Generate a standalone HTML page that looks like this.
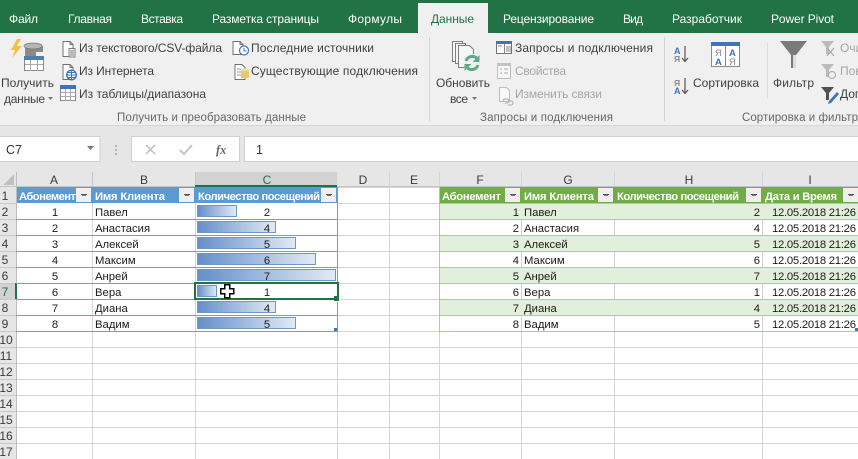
<!DOCTYPE html>
<html><head><meta charset="utf-8"><title>Excel</title>
<style>
html,body{margin:0;padding:0;background:#fff;overflow:hidden}
svg{display:block}
text{font-family:"Liberation Sans",sans-serif;font-size:12px;fill:#333}
.t{fill:#fff;font-size:12px}
.r{fill:#404040;font-size:12px}
.g{fill:#a6a6a6;font-size:12px}
.l{fill:#666;font-size:11.5px}
.c{font-size:11.3px;fill:#1a1a1a}
.h{font-size:11.2px;fill:#fff;font-weight:bold}
.m{text-anchor:middle}
.e{text-anchor:end}
.n{fill:#3a3a3a;font-size:12px;text-anchor:middle}
.q{shape-rendering:crispEdges}
</style></head><body>
<svg width="858" height="459" viewBox="0 0 858 459" xmlns="http://www.w3.org/2000/svg">
<defs>
<linearGradient id="b"><stop offset="0" stop-color="#648fc8"/><stop offset="1" stop-color="#e3eaf5"/></linearGradient>
</defs>
<g class="q">
<rect width="858" height="459" fill="#fff"/>
<rect width="858" height="33" fill="#217346"/>
<rect x="418" y="3" width="70" height="31" fill="#f0f0f0"/>
<rect y="33" width="858" height="92" fill="#f0f0f0"/>
<rect y="125" width="858" height="62" fill="#e6e6e6"/>
<rect y="125" width="858" height="1" fill="#d6d6d6"/>
<rect x="429" y="37" width="1" height="84" fill="#d4d4d4"/>
<rect x="664" y="37" width="1" height="84" fill="#d4d4d4"/>
<rect x="767" y="43" width="1" height="55" fill="#dcdcdc"/>
<!-- formula bar -->
<rect x="-1" y="136.500" width="101" height="25" fill="#fff" stroke="#d0d0d0"/>
<rect x="131.500" y="136.500" width="108" height="25" fill="#fff" stroke="#d0d0d0"/>
<rect x="244.500" y="136.500" width="620" height="25" fill="#fff" stroke="#d0d0d0"/>
<rect x="115" y="145" width="2" height="2" fill="#b5b5b5"/><rect x="115" y="149" width="2" height="2" fill="#b5b5b5"/><rect x="115" y="153" width="2" height="2" fill="#b5b5b5"/>
<!-- row headers -->
<rect y="172" width="858" height="15" fill="#e6e6e6"/>
<rect y="187" width="16" height="272" fill="#e6e6e6"/>
<rect x="195" y="172" width="142" height="14" fill="#d2d2d2"/>
<rect x="195" y="185" width="142" height="2" fill="#217346"/>
<rect y="283" width="16" height="16" fill="#d2d2d2"/>
<!-- grid -->
<rect x="16" y="331" width="842" height="1" fill="#d4d4d4"/><rect x="16" y="347" width="842" height="1" fill="#d4d4d4"/>
<rect x="16" y="363" width="842" height="1" fill="#d4d4d4"/><rect x="16" y="379" width="842" height="1" fill="#d4d4d4"/>
<rect x="16" y="395" width="842" height="1" fill="#d4d4d4"/><rect x="16" y="411" width="842" height="1" fill="#d4d4d4"/>
<rect x="16" y="427" width="842" height="1" fill="#d4d4d4"/><rect x="16" y="443" width="842" height="1" fill="#d4d4d4"/>
<rect x="337" y="187" width="102" height="1" fill="#d4d4d4"/><rect x="337" y="203" width="102" height="1" fill="#d4d4d4"/>
<rect x="337" y="219" width="102" height="1" fill="#d4d4d4"/><rect x="337" y="235" width="102" height="1" fill="#d4d4d4"/>
<rect x="337" y="251" width="102" height="1" fill="#d4d4d4"/><rect x="337" y="267" width="102" height="1" fill="#d4d4d4"/>
<rect x="337" y="283" width="102" height="1" fill="#d4d4d4"/><rect x="337" y="299" width="102" height="1" fill="#d4d4d4"/>
<rect x="337" y="315" width="102" height="1" fill="#d4d4d4"/>
<rect x="92" y="203" width="1" height="256" fill="#d4d4d4"/><rect x="195" y="203" width="1" height="256" fill="#d4d4d4"/>
<rect x="337" y="187" width="1" height="272" fill="#d4d4d4"/><rect x="389" y="172" width="1" height="287" fill="#d4d4d4"/>
<rect x="439" y="172" width="1" height="287" fill="#d4d4d4"/><rect x="521" y="172" width="1" height="287" fill="#d4d4d4"/>
<rect x="614" y="172" width="1" height="287" fill="#d4d4d4"/><rect x="762" y="172" width="1" height="287" fill="#d4d4d4"/>
<rect x="16" y="172" width="1" height="287" fill="#bdbdbd"/><rect x="92" y="172" width="1" height="15" fill="#c8c8c8"/>
<rect x="195" y="172" width="1" height="15" fill="#c8c8c8"/>
<rect x="0" y="186" width="858" height="1" fill="#c4c4c4"/>
<rect y="203" width="16" height="1" fill="#c8c8c8"/><rect y="219" width="16" height="1" fill="#c8c8c8"/>
<rect y="235" width="16" height="1" fill="#c8c8c8"/><rect y="251" width="16" height="1" fill="#c8c8c8"/>
<rect y="267" width="16" height="1" fill="#c8c8c8"/><rect y="283" width="16" height="1" fill="#c8c8c8"/>
<rect y="299" width="16" height="1" fill="#c8c8c8"/><rect y="315" width="16" height="1" fill="#c8c8c8"/>
<rect y="331" width="16" height="1" fill="#c8c8c8"/><rect y="347" width="16" height="1" fill="#c8c8c8"/>
<rect y="363" width="16" height="1" fill="#c8c8c8"/><rect y="379" width="16" height="1" fill="#c8c8c8"/>
<rect y="395" width="16" height="1" fill="#c8c8c8"/><rect y="411" width="16" height="1" fill="#c8c8c8"/>
<rect y="427" width="16" height="1" fill="#c8c8c8"/><rect y="443" width="16" height="1" fill="#c8c8c8"/>
<rect x="195" y="185" width="142" height="2" fill="#217346"/>
<rect x="15" y="283" width="2" height="16" fill="#217346"/>
<polygon points="14,174 14,185 3,185" fill="#c0c0c0"/>
<!-- blue table -->
<rect x="17" y="187" width="320" height="16" fill="#5b9bd5"/>
<rect x="16" y="219" width="322" height="1" fill="#6f9fcf"/><rect x="16" y="235" width="322" height="1" fill="#6f9fcf"/>
<rect x="16" y="251" width="322" height="1" fill="#6f9fcf"/><rect x="16" y="267" width="322" height="1" fill="#6f9fcf"/>
<rect x="16" y="283" width="322" height="1" fill="#6f9fcf"/><rect x="16" y="299" width="322" height="1" fill="#6f9fcf"/>
<rect x="16" y="315" width="322" height="1" fill="#6f9fcf"/><rect x="16" y="331" width="322" height="1" fill="#6f9fcf"/>
<rect x="337" y="187" width="1" height="145" fill="#6f9fcf"/>
<!-- data bars -->
<rect x="197.500" y="205.500" width="39" height="11" fill="url(#b)" stroke="#6f96cb"/>
<rect x="197.500" y="221.500" width="78" height="11" fill="url(#b)" stroke="#6f96cb"/>
<rect x="197.500" y="237.500" width="98" height="11" fill="url(#b)" stroke="#6f96cb"/>
<rect x="197.500" y="253.500" width="118" height="11" fill="url(#b)" stroke="#6f96cb"/>
<rect x="197.500" y="269.500" width="138" height="11" fill="url(#b)" stroke="#6f96cb"/>
<rect x="197.500" y="285.500" width="19" height="11" fill="url(#b)" stroke="#6f96cb"/>
<rect x="197.500" y="301.500" width="78" height="11" fill="url(#b)" stroke="#6f96cb"/>
<rect x="197.500" y="317.500" width="98" height="11" fill="url(#b)" stroke="#6f96cb"/>
<!-- green table -->
<rect x="440" y="187" width="418" height="16" fill="#70ad47"/>
<rect x="440" y="204" width="418" height="15" fill="#e2efda"/><rect x="440" y="236" width="418" height="15" fill="#e2efda"/>
<rect x="440" y="268" width="418" height="15" fill="#e2efda"/><rect x="440" y="300" width="418" height="15" fill="#e2efda"/>
<rect x="439" y="203" width="419" height="1" fill="#a9d08e"/><rect x="439" y="219" width="419" height="1" fill="#a9d08e"/>
<rect x="439" y="235" width="419" height="1" fill="#a9d08e"/><rect x="439" y="251" width="419" height="1" fill="#a9d08e"/>
<rect x="439" y="267" width="419" height="1" fill="#a9d08e"/><rect x="439" y="283" width="419" height="1" fill="#a9d08e"/>
<rect x="439" y="299" width="419" height="1" fill="#a9d08e"/><rect x="439" y="315" width="419" height="1" fill="#a9d08e"/>
<rect x="439" y="331" width="419" height="1" fill="#a9d08e"/>
<rect x="439" y="187" width="1" height="145" fill="#a9d08e"/>
<!-- filter buttons -->
<rect x="76" y="188" width="15" height="14" fill="#efefef"/><rect x="179" y="188" width="15" height="14" fill="#efefef"/>
<rect x="321" y="188" width="15" height="14" fill="#efefef"/><rect x="505" y="188" width="15" height="14" fill="#efefef"/>
<rect x="598" y="188" width="15" height="14" fill="#efefef"/><rect x="746" y="188" width="15" height="14" fill="#efefef"/>
<rect x="843" y="188" width="15" height="14" fill="#efefef"/>
<rect x="81" y="194" width="6" height="1" fill="#555"/><rect x="82" y="195" width="4" height="1" fill="#777"/>
<rect x="184" y="194" width="6" height="1" fill="#555"/><rect x="185" y="195" width="4" height="1" fill="#777"/>
<rect x="326" y="194" width="6" height="1" fill="#555"/><rect x="327" y="195" width="4" height="1" fill="#777"/>
<rect x="510" y="194" width="6" height="1" fill="#555"/><rect x="511" y="195" width="4" height="1" fill="#777"/>
<rect x="603" y="194" width="6" height="1" fill="#555"/><rect x="604" y="195" width="4" height="1" fill="#777"/>
<rect x="751" y="194" width="6" height="1" fill="#555"/><rect x="752" y="195" width="4" height="1" fill="#777"/>
<rect x="848" y="194" width="6" height="1" fill="#555"/><rect x="849" y="195" width="4" height="1" fill="#777"/>
<!-- selection -->
<rect x="195" y="283" width="143" height="16" fill="none" stroke="#217346" stroke-width="2"/>
<rect x="335" y="297" width="5" height="5" fill="#fff"/>
<rect x="334" y="296" width="5" height="5" fill="#217346"/>
<rect x="334" y="328" width="3" height="3" fill="#3f74b8"/>
<rect x="855" y="328" width="3" height="3" fill="#3f74b8"/>
</g>

<!-- tabs -->
<text class="t" x="9" y="23" textLength="29">Файл</text>
<text class="t" x="68" y="23" textLength="44">Главная</text>
<text class="t" x="141" y="23" textLength="42">Вставка</text>
<text class="t" x="212" y="23" textLength="107">Разметка страницы</text>
<text class="t" x="348" y="23" textLength="54">Формулы</text>
<text class="t" x="431" y="23" textLength="43" style="fill:#217346">Данные</text>
<text class="t" x="503" y="23" textLength="91">Рецензирование</text>
<text class="t" x="623" y="23" textLength="20">Вид</text>
<text class="t" x="672" y="23" textLength="70">Разработчик</text>
<text class="t" x="771" y="23" textLength="63">Power Pivot</text>

<!-- ribbon text -->
<text class="r" x="1" y="87" textLength="53">Получить</text>
<text class="r" x="4" y="103" textLength="41">данные</text>
<polygon points="48,97 53,97 50.500,100" fill="#777"/>
<text class="r" x="79" y="52" textLength="143">Из текстового/CSV-файла</text>
<text class="r" x="79" y="75" textLength="75">Из Интернета</text>
<text class="r" x="79" y="98" textLength="127">Из таблицы/диапазона</text>
<text class="r" x="251" y="52" textLength="123">Последние источники</text>
<text class="r" x="251" y="75" textLength="167">Существующие подключения</text>
<text class="l" x="117" y="121" textLength="189">Получить и преобразовать данные</text>
<text class="r" x="436" y="87" textLength="54">Обновить</text>
<text class="r" x="450" y="103" textLength="18">все</text>
<polygon points="472,97 477,97 474.500,100" fill="#777"/>
<text class="r" x="515" y="52" textLength="138">Запросы и подключения</text>
<text class="g" x="515" y="75" textLength="51">Свойства</text>
<text class="g" x="515" y="98" textLength="87">Изменить связи</text>
<text class="l" x="480" y="121" textLength="133">Запросы и подключения</text>
<text class="r" x="693" y="87" textLength="66">Сортировка</text>
<text class="r" x="773" y="87" textLength="41">Фильтр</text>
<text class="g" x="840" y="52">Очистить</text>
<text class="g" x="840" y="75">Повторить</text>
<text class="r" x="840" y="98">Дополнительно</text>
<text class="l" x="742" y="121" textLength="116">Сортировка и фильтр</text>

<!-- get data icon -->
<polygon points="17,39 11,50 15,50 12,58 22,46 17,46 21,39" fill="#f2c042"/>
<path d="M25 46v18h11v-12h7v-6z" fill="#8a8a8a"/>
<ellipse cx="33" cy="46" rx="9" ry="3" fill="#b5b5b5" stroke="#777" stroke-width=".7"/>
<g class="q">
<rect x="24.500" y="56.500" width="19" height="14" fill="#fff" stroke="#8a8a8a"/>
<rect x="24" y="56" width="20" height="4" fill="#4a7fb0"/>
<path d="M25 64.500h18M30.500 60v11M37.500 60v11" stroke="#aaa" fill="none"/>
</g>
<!-- small doc icons -->
<path d="M63 41.500h7l3 3v12h-10z M70 41.500v3h3" fill="#fff" stroke="#707070"/>
<path d="M69 48.500h6v8.500h-6z" fill="#f4f4f4" stroke="#808080"/><path d="M70 51h4M70 53h4M70 55h4" stroke="#808080"/>
<path d="M63 64.500h7l3 3v12h-10z M70 64.500v3h3" fill="#fff" stroke="#707070"/>
<circle cx="71.500" cy="75" r="4.800" fill="#fff" stroke="#3f74b8" stroke-width="1.400"/>
<path d="M67 75h9M71.500 70.500v9M68 72.500h7M68 77.500h7" stroke="#3f74b8"/>
<g class="q">
<rect x="60.500" y="85.500" width="15" height="15" fill="#fff" stroke="#8a8a8a"/>
<rect x="60" y="85" width="16" height="4" fill="#3f74b8"/>
<path d="M61 92.500h14M61 96.500h14M65.500 89v12M70.500 89v12" stroke="#aaa"/>
</g>
<path d="M233 41.500h7l3 3v10h-10z M240 41.500v3h3" fill="#fff" stroke="#707070"/>
<circle cx="244" cy="50.500" r="4.500" fill="#fff" stroke="#3f74b8" stroke-width="1.200"/><path d="M244 48v3h2.500" stroke="#3f74b8" fill="none"/>
<path d="M235 64.500h7l3 3v12h-10z" fill="#fff" stroke="#707070"/>
<path d="M237 69h4M237 72h4M237 75h4" stroke="#999"/>
<path d="M241 70h8v8h-8z" fill="#e8c86c"/><ellipse cx="245" cy="70" rx="4" ry="1.500" fill="#f2dc9c"/>
<!-- refresh icon -->
<g fill="#f6f6f6" stroke="#7f7f7f">
<path d="M452.500 41.500h10v20h-10z"/><path d="M455.500 43.500h10v20h-10z"/>
<path d="M458.500 45.500h11l4 4v18h-15z"/>
</g>
<circle cx="472" cy="63" r="9" fill="#f0f0f0"/>
<path d="M466 61a6.500 6.500 0 0 1 10.500-3" fill="none" stroke="#5fa88a" stroke-width="3"/>
<polygon points="479.500,55 479.500,62 472.500,62" fill="#5fa88a"/>
<path d="M478 65a6.500 6.500 0 0 1-10.500 3" fill="none" stroke="#5fa88a" stroke-width="3"/>
<polygon points="464.500,71 464.500,64 471.500,64" fill="#5fa88a"/>
<!-- queries icons -->
<g class="q">
<rect x="496.500" y="41.500" width="15" height="12" fill="#fff" stroke="#707070"/>
<rect x="496" y="41" width="16" height="3" fill="#3f74b8"/>
<path d="M504.500 44v9M506 47h5M506 49h5M506 51h5M498 46h4" stroke="#888"/>
<rect x="497.500" y="63.500" width="13" height="15" fill="#f7f7f7" stroke="#bdbdbd"/>
<rect x="497" y="63" width="14" height="3" fill="#c4c4c4"/>
<path d="M500 69h2M504 69h4M500 73h2M504 73h4" stroke="#aaa"/>
</g>
<path d="M499.500 87.500h7l3 3v11h-10z" fill="#f8f8f8" stroke="#bdbdbd"/>
<path d="M503 101a2 2 0 0 1 2-2h2a2 2 0 0 1 0 4h-2M508 101h3a2 2 0 0 1 0 4h-3" fill="none" stroke="#a8a8a8"/>
<!-- sort icons -->
<text x="674" y="54" style="font-size:9px;font-weight:bold;fill:#3f74b8">А</text>
<text x="674" y="62" style="font-size:8.500px;font-weight:bold;fill:#8a8a8a">Я</text>
<path d="M685 46v15M682 58l3 3.500 3-3.500" fill="none" stroke="#555" stroke-width="1.200"/>
<text x="674" y="86" style="font-size:8.500px;font-weight:bold;fill:#8a8a8a">Я</text>
<text x="674" y="94" style="font-size:9px;font-weight:bold;fill:#3f74b8">А</text>
<path d="M685 78v15M682 90l3 3.500 3-3.500" fill="none" stroke="#555" stroke-width="1.200"/>
<g class="q">
<rect x="711.500" y="42.500" width="28" height="24" fill="#fff" stroke="#8a8a8a"/>
<rect x="711" y="42" width="29" height="4" fill="#3f74b8"/>
<rect x="725" y="46" width="1" height="21" fill="#8a8a8a"/>
</g>
<text x="715" y="56" style="font-size:9.500px;fill:#8a8a8a">Я</text>
<text x="715" y="65" style="font-size:9.500px;font-weight:bold;fill:#3f74b8">А</text>
<text x="729" y="56" style="font-size:9.500px;font-weight:bold;fill:#3f74b8">А</text>
<text x="729" y="65" style="font-size:9.500px;fill:#8a8a8a">Я</text>
<!-- filter icons -->
<path d="M780 41h27l-11 14v13h-5v-13z" fill="#7a7a7a"/><path d="M793 55v13h3v-13z" fill="#dcdcdc"/>
<path d="M821 41h13l-5 6v7h-3v-7z" fill="#bcbcbc"/><path d="M827 48l7 8M834 48l-7 8" stroke="#a8a8a8" stroke-width="1.200"/>
<path d="M821 64h13l-5 6v7h-3v-7z" fill="#bcbcbc"/><circle cx="832" cy="75" r="3.500" fill="none" stroke="#a8a8a8"/>
<path d="M821 87h13l-5 6v7h-3v-7z" fill="#505050"/><path d="M829 101l8-9 2 2-8 9-3 1z" fill="#3f74b8"/>

<!-- formula bar -->
<text x="6" y="154" style="font-size:12.500px;fill:#333">C7</text>
<polygon points="87,146 94,146 90.500,150" fill="#777"/>
<path d="M146 145l9 9M155 145l-9 9" stroke="#c4c4c4" stroke-width="1.600"/>
<path d="M180 150l4 4 8-9" fill="none" stroke="#c4c4c4" stroke-width="2"/>
<text x="216" y="154" style="font-family:'Liberation Serif',serif;font-style:italic;font-weight:bold;font-size:12.500px;fill:#666">fx</text>
<text x="256" y="154" style="font-size:12.500px;fill:#333">1</text>

<!-- column headers -->
<text class="n" x="54" y="184">A</text><text class="n" x="144" y="184">B</text>
<text class="n" x="267" y="184" style="fill:#217346">C</text><text class="n" x="363" y="184">D</text>
<text class="n" x="414" y="184">E</text><text class="n" x="480" y="184">F</text>
<text class="n" x="568" y="184">G</text><text class="n" x="689" y="184">H</text>
<text class="n" x="810" y="184">I</text>
<!-- row numbers -->
<text class="n" x="5" y="200">1</text><text class="n" x="5" y="216">2</text>
<text class="n" x="5" y="232">3</text><text class="n" x="5" y="248">4</text>
<text class="n" x="5" y="264">5</text><text class="n" x="5" y="280">6</text>
<text class="n" x="5" y="296" style="fill:#217346">7</text><text class="n" x="5" y="312">8</text>
<text class="n" x="5" y="328">9</text><text class="n" x="6" y="344">10</text>
<text class="n" x="6" y="360">11</text><text class="n" x="6" y="376">12</text>
<text class="n" x="6" y="392">13</text><text class="n" x="6" y="408">14</text>
<text class="n" x="6" y="424">15</text><text class="n" x="6" y="440">16</text>
<text class="n" x="6" y="456">17</text>

<!-- left table -->
<text class="h" x="19" y="200" textLength="57">Абонемент</text>
<text class="h" x="95" y="200" textLength="70">Имя Клиента</text>
<text class="h" x="198" y="200" textLength="122">Количество посещений</text>
<text class="c m" x="55" y="216">1</text><text class="c m" x="55" y="232">2</text><text class="c m" x="55" y="248">3</text><text class="c m" x="55" y="264">4</text>
<text class="c m" x="55" y="280">5</text><text class="c m" x="55" y="296">6</text><text class="c m" x="55" y="312">7</text><text class="c m" x="55" y="328">8</text>
<text class="c" x="95" y="216">Павел</text><text class="c" x="95" y="232">Анастасия</text><text class="c" x="95" y="248">Алексей</text><text class="c" x="95" y="264">Максим</text>
<text class="c" x="95" y="280">Анрей</text><text class="c" x="95" y="296">Вера</text><text class="c" x="95" y="312">Диана</text><text class="c" x="95" y="328">Вадим</text>
<text class="c m" x="267" y="216">2</text><text class="c m" x="267" y="232">4</text><text class="c m" x="267" y="248">5</text><text class="c m" x="267" y="264">6</text>
<text class="c m" x="267" y="280">7</text><text class="c m" x="267" y="296">1</text><text class="c m" x="267" y="312">4</text><text class="c m" x="267" y="328">5</text>

<!-- right table -->
<text class="h" x="442" y="200" textLength="59">Абонемент</text>
<text class="h" x="524" y="200" textLength="70">Имя Клиента</text>
<text class="h" x="617" y="200" textLength="122">Количество посещений</text>
<text class="h" x="765" y="200" textLength="72">Дата и Время</text>
<text class="c e" x="519" y="216">1</text><text class="c e" x="519" y="232">2</text><text class="c e" x="519" y="248">3</text><text class="c e" x="519" y="264">4</text>
<text class="c e" x="519" y="280">5</text><text class="c e" x="519" y="296">6</text><text class="c e" x="519" y="312">7</text><text class="c e" x="519" y="328">8</text>
<text class="c" x="524" y="216">Павел</text><text class="c" x="524" y="232">Анастасия</text><text class="c" x="524" y="248">Алексей</text><text class="c" x="524" y="264">Максим</text>
<text class="c" x="524" y="280">Анрей</text><text class="c" x="524" y="296">Вера</text><text class="c" x="524" y="312">Диана</text><text class="c" x="524" y="328">Вадим</text>
<text class="c e" x="760" y="216">2</text><text class="c e" x="760" y="232">4</text><text class="c e" x="760" y="248">5</text><text class="c e" x="760" y="264">6</text>
<text class="c e" x="760" y="280">7</text><text class="c e" x="760" y="296">1</text><text class="c e" x="760" y="312">4</text><text class="c e" x="760" y="328">5</text>
<text class="c" x="772" y="216" textLength="84">12.05.2018 21:26</text><text class="c" x="772" y="232" textLength="84">12.05.2018 21:26</text>
<text class="c" x="772" y="248" textLength="84">12.05.2018 21:26</text><text class="c" x="772" y="264" textLength="84">12.05.2018 21:26</text>
<text class="c" x="772" y="280" textLength="84">12.05.2018 21:26</text><text class="c" x="772" y="296" textLength="84">12.05.2018 21:26</text>
<text class="c" x="772" y="312" textLength="84">12.05.2018 21:26</text><text class="c" x="772" y="328" textLength="84">12.05.2018 21:26</text>

<!-- cursor -->
<path class="q" d="M224.500 284.500h5v4h4v5h-4v4h-5v-4h-4v-5h4z" fill="#fff" stroke="#000" stroke-width="1.500"/>
</svg>
</body></html>
